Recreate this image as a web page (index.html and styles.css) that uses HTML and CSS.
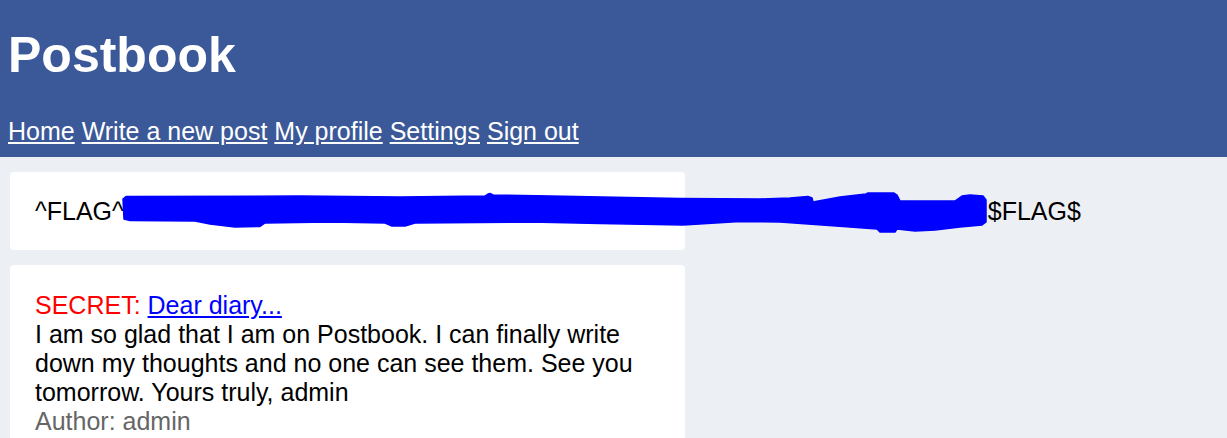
FILE: index.html
```html
<!DOCTYPE html>
<html lang="en">
<head>
<meta charset="utf-8">
<title>Postbook</title>
<link rel="stylesheet" href="styles.css">
</head>
<body>
<header class="site-header">
  <h1 class="site-title">Postbook</h1>
  <nav class="site-nav">
    <a href="#">Home</a> <a href="#">Write a new post</a> <a href="#">My profile</a> <a href="#">Settings</a> <a href="#">Sign out</a>
  </nav>
</header>
<main class="posts">
  <div class="card">
    <p class="flag">^FLAG^<span class="redact"><svg class="scribble" width="870" height="45" viewBox="0 0 870 45" aria-hidden="true"><path d="M3 9 L6 6.5 L180 6 L280 7 L365 6 L368 4 L370 3.5 L373 5 L430 6 L560 8.5 L640 9 L670 8 L688 6.5 L692 8 L693 12 L720 7 L746 4 L748 3 L774 3 L777 5 L780 11 L835 11 L842 6 L850 5 L863 6 L866 10 L866 32 L862 35 L840 37 L815 40 L795 41 L777 39 L775 42 L760 42 L757 39 L730 37 L660 32 L620 31.5 L563 35 L480 33.5 L410 32 L295 33 L285 36 L272 36 L265 33 L210 32 L145 33 L140 36.5 L115 37 L90 34 L75 31 L10 30.5 L4 29 Z" fill="#0000ff" stroke="#0000ff" stroke-width="1.5" stroke-linejoin="round"/></svg></span>$FLAG$</p>
  </div>
  <div class="card">
    <div class="post-title"><span class="secret">SECRET:</span> <a href="#" class="post-link">Dear diary...</a></div>
    <p class="post-body">I am so glad that I am on Postbook. I can finally write down my thoughts and no one can see them. See you tomorrow. Yours truly, admin</p>
    <div class="post-author">Author: admin</div>
  </div>
</main>
</body>
</html>
```
FILE: styles.css
```css
html, body {
  margin: 0;
  padding: 0;
}
body {
  background: #eceff3;
  font-family: "Liberation Sans", Arial, sans-serif;
  font-size: 25px;
  color: #000;
  overflow: hidden;
}
.site-header {
  background: #3b5998;
  color: #fff;
  padding: 26.5px 8px 11.5px;
}
.site-title {
  margin: 0 0 33px;
  font-size: 50px;
  font-weight: bold;
  line-height: 57px;
}
.site-nav {
  line-height: 29px;
}
.site-nav a {
  color: #fff;
  text-decoration: underline;
}
.posts {
  padding: 15px 0 0 10px;
}
.card {
  background: #fff;
  width: 675px;
  box-sizing: border-box;
  padding: 25px;
  border-radius: 4px;
  margin-bottom: 15px;
}
.flag {
  margin: 0;
  white-space: nowrap;
  line-height: 28px;
}
.redact {
  display: inline-block;
  position: relative;
  width: 864px;
  height: 18px;
}
.scribble {
  position: absolute;
  left: -4px;
  top: -12px;
}
.post-title {
  margin-top: 1px;
}
.secret {
  color: #ff0000;
}
.post-link {
  color: #0000ff;
  text-decoration: underline;
}
.post-body {
  margin: 0;
}
.post-author {
  color: #666;
}
```
